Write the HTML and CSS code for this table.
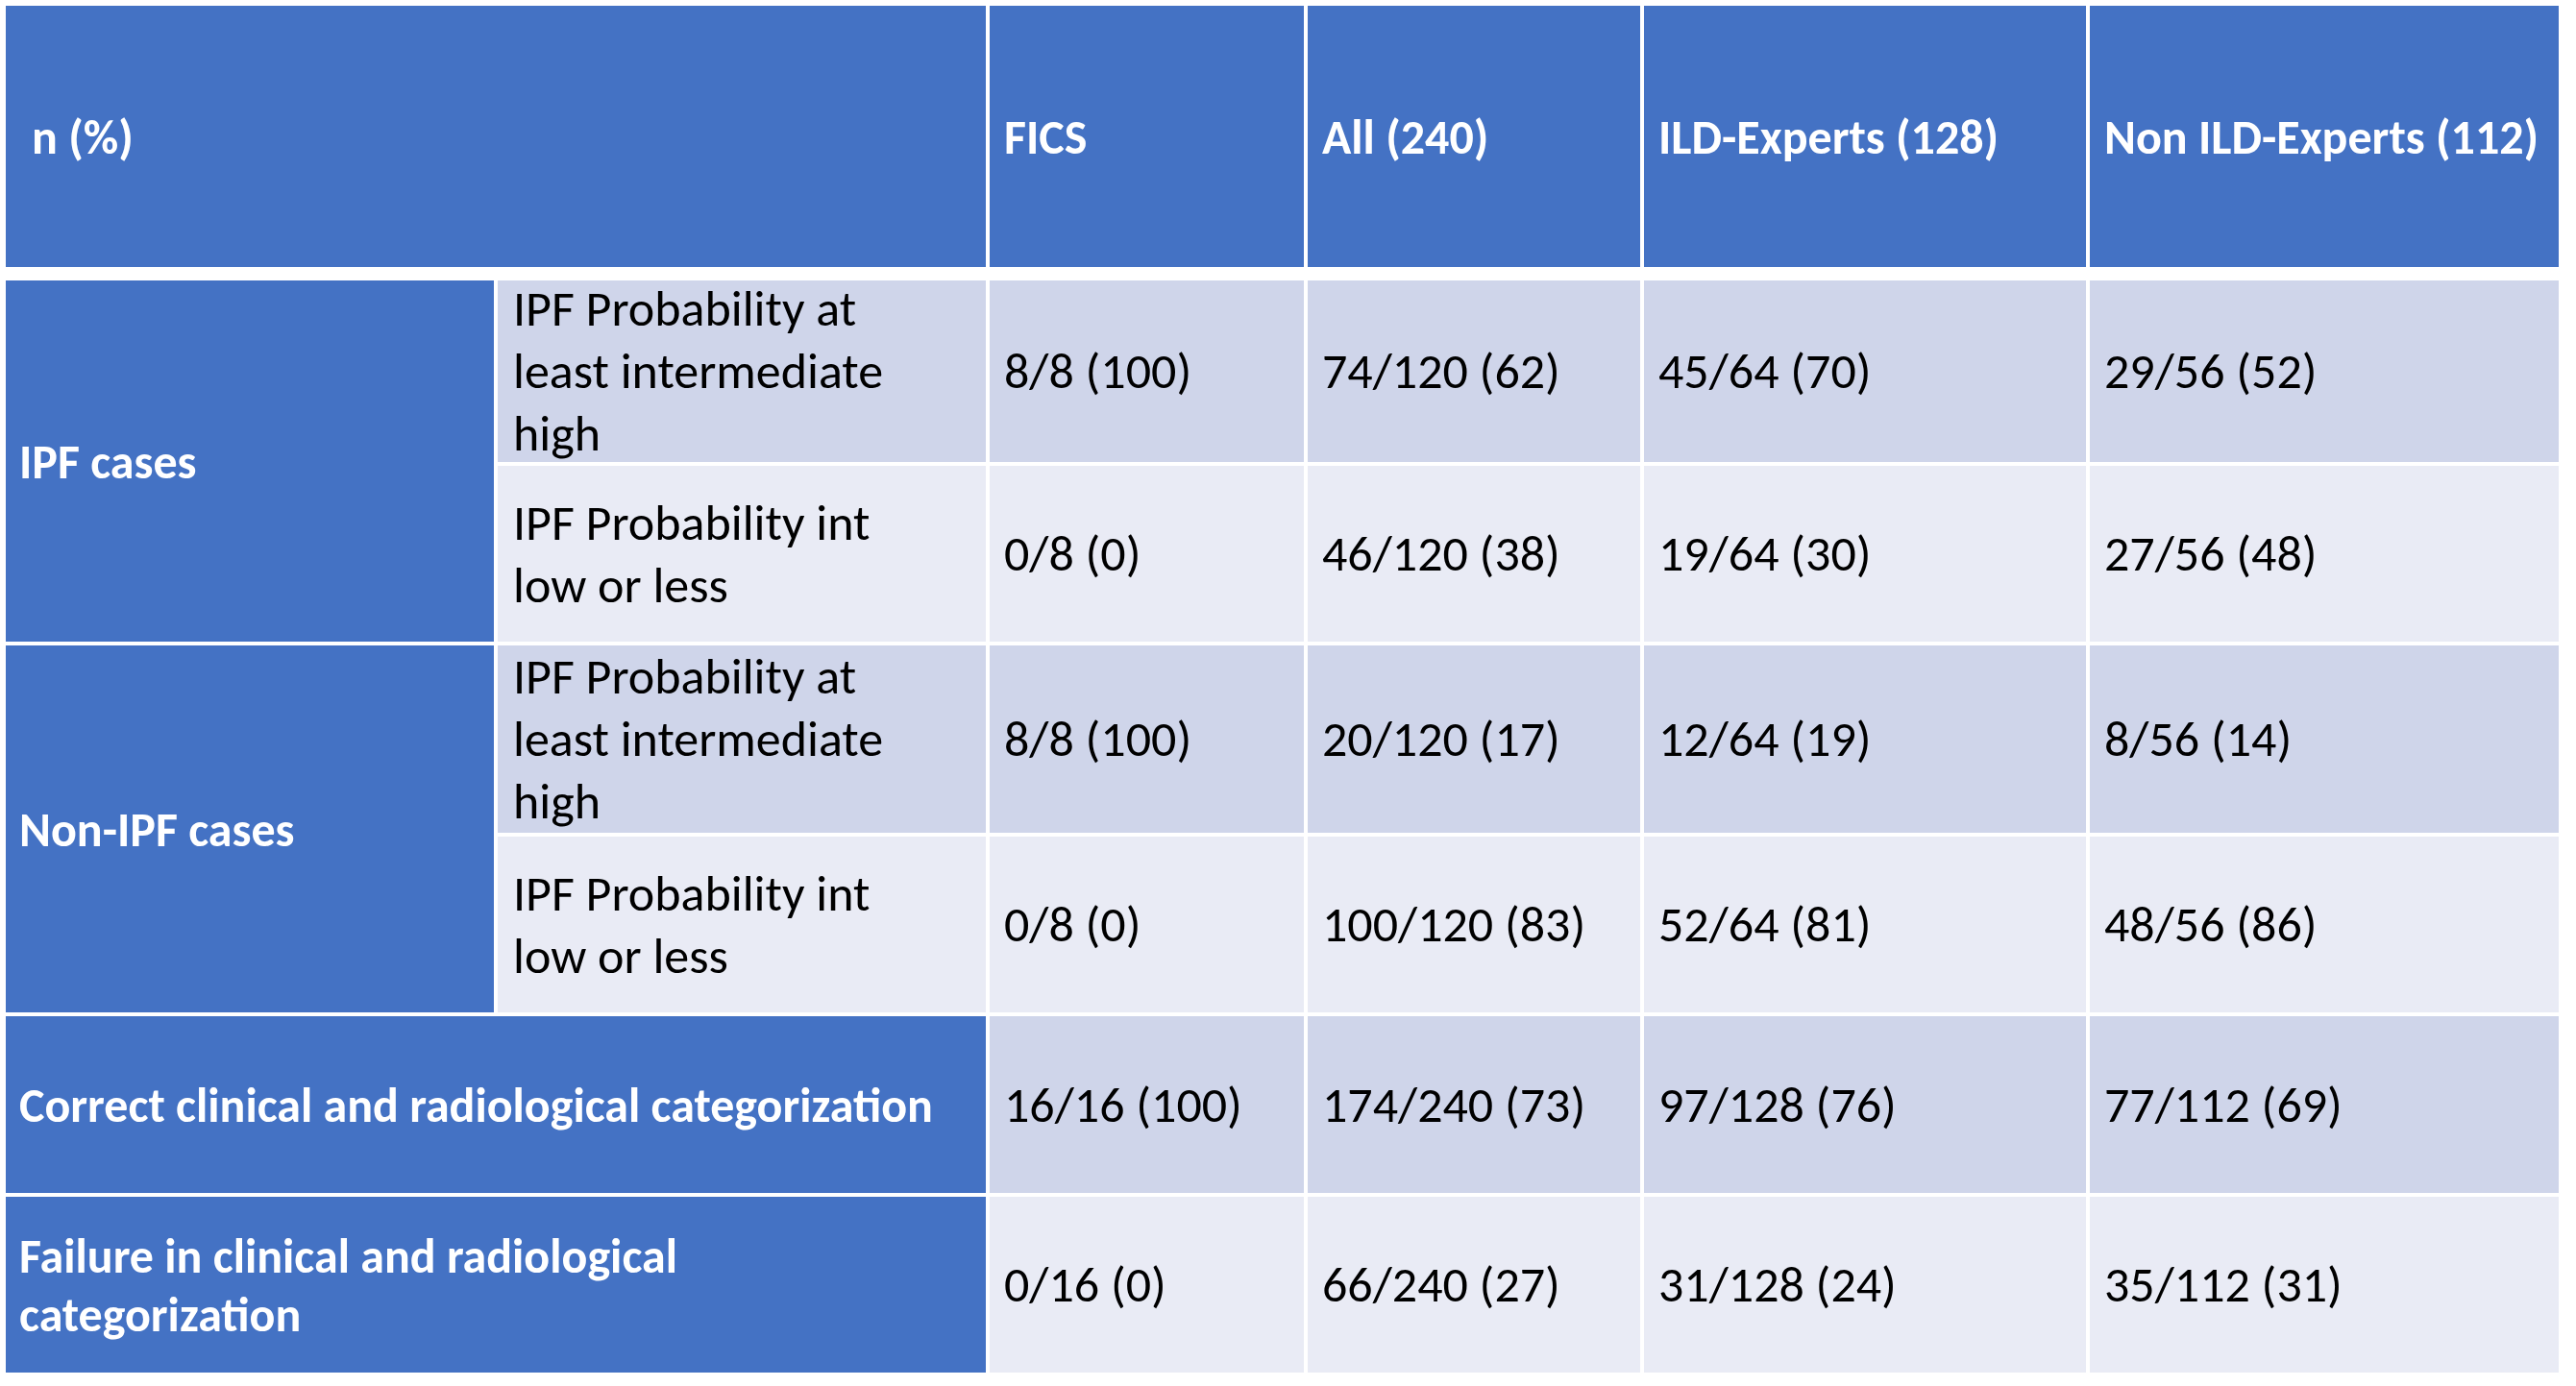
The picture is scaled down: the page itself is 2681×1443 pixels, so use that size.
FILE: index.html
```html
<!DOCTYPE html>
<html lang="en">
<head>
<meta charset="utf-8">
<title>IPF categorization table</title>
<link rel="stylesheet" href="styles.css">
</head>
<body>
<div class="table">
  <div class="grid head">
    <div class="cell hd span2 first">n (%)</div>
    <div class="cell hd">FICS</div>
    <div class="cell hd">All (240)</div>
    <div class="cell hd">ILD-Experts (128)</div>
    <div class="cell hd">Non ILD-Experts (112)</div>
  </div>
  <div class="grid body">
    <div class="cell grp g1">IPF cases</div>
    <div class="cell dark sub">IPF Probability at<br>least intermediate<br>high</div>
    <div class="cell dark">8/8 (100)</div>
    <div class="cell dark">74/120 (62)</div>
    <div class="cell dark">45/64 (70)</div>
    <div class="cell dark">29/56 (52)</div>

    <div class="cell light sub">IPF Probability int<br>low or less</div>
    <div class="cell light">0/8 (0)</div>
    <div class="cell light">46/120 (38)</div>
    <div class="cell light">19/64 (30)</div>
    <div class="cell light">27/56 (48)</div>

    <div class="cell grp g2">Non-IPF cases</div>
    <div class="cell dark sub">IPF Probability at<br>least intermediate<br>high</div>
    <div class="cell dark">8/8 (100)</div>
    <div class="cell dark">20/120 (17)</div>
    <div class="cell dark">12/64 (19)</div>
    <div class="cell dark">8/56 (14)</div>

    <div class="cell light sub">IPF Probability int<br>low or less</div>
    <div class="cell light">0/8 (0)</div>
    <div class="cell light">100/120 (83)</div>
    <div class="cell light">52/64 (81)</div>
    <div class="cell light">48/56 (86)</div>

    <div class="cell grp span2">Correct clinical and radiological categorization</div>
    <div class="cell dark">16/16 (100)</div>
    <div class="cell dark">174/240 (73)</div>
    <div class="cell dark">97/128 (76)</div>
    <div class="cell dark">77/112 (69)</div>

    <div class="cell grp span2 two">Failure in clinical and radiological<br>categorization</div>
    <div class="cell light">0/16 (0)</div>
    <div class="cell light">66/240 (27)</div>
    <div class="cell light">31/128 (24)</div>
    <div class="cell light">35/112 (31)</div>
  </div>
</div>
</body>
</html>
```

FILE: styles.css
```css
html, body {
  margin: 0;
  padding: 0;
  background: #ffffff;
}

body {
  padding: 6px 0 0 6px;
  font-family: "Carlito", "Calibri", "Lato", "Open Sans", sans-serif;
}

.table {
  width: 2658px;
}

.grid {
  display: grid;
  grid-template-columns: 508px 508px 327px 346px 460px 488px;
  column-gap: 4px;
  row-gap: 4px;
}

.head {
  grid-template-rows: 272px;
  margin-bottom: 14px;
}

.body {
  grid-template-rows: 189px 183px 195px 183px 184px 183px;
}

.cell {
  display: flex;
  align-items: center;
  padding-left: 15px;
  box-sizing: border-box;
  font-size: 52px;
  line-height: 65px;
  color: #000000;
  white-space: nowrap;
}

.hd {
  background: #4472c4;
  color: #ffffff;
  font-weight: 700;
  font-size: 50px;
}

.first {
  padding-left: 27px;
}

.span2 {
  grid-column: span 2;
}

.grp {
  background: #4472c4;
  color: #ffffff;
  font-weight: 700;
  font-size: 50px;
  padding-left: 14px;
}

.g1 {
  grid-column: 1;
  grid-row: 1 / span 2;
}

.g2 {
  grid-column: 1;
  grid-row: 3 / span 2;
}

.two {
  line-height: 61px;
}

.dark {
  background: #cfd5ea;
}

.light {
  background: #e9ebf5;
}

.sub {
  padding-left: 16px;
}
```
